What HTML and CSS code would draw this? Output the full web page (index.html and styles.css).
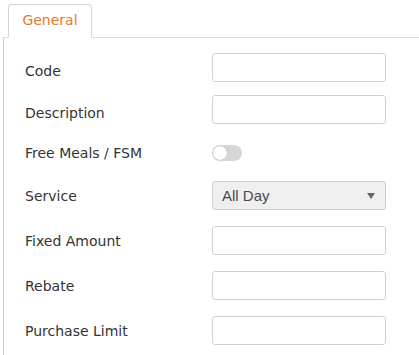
FILE: index.html
```html
<!DOCTYPE html>
<html lang="en">
<head>
    <meta charset="UTF-8">
    <meta name="viewport" content="width=device-width, initial-scale=1.0">
    <title>Meal Type</title>
    <link rel="stylesheet" href="styles.css">
</head>
<body>
    <div class="page">
        <!-- Tabs -->
        <div class="tabs">
            <div class="tab active">General</div>
        </div>

        <!-- General tab content -->
        <div class="panel">
            <div class="row row-top">
                <label class="label" for="code">Code</label>
                <input type="text" id="code" class="input-box">
            </div>
            <div class="row row-top">
                <label class="label" for="description">Description</label>
                <input type="text" id="description" class="input-box">
            </div>
            <div class="row row-toggle">
                <label class="label">Free Meals / FSM</label>
                <span class="toggle"><span class="knob"></span></span>
            </div>
            <div class="row">
                <label class="label" for="service">Service</label>
                <div class="select-box" id="service">
                    <span>All Day</span>
                    <span class="arrow"></span>
                </div>
            </div>
            <div class="row">
                <label class="label" for="fixed-amount">Fixed Amount</label>
                <input type="text" id="fixed-amount" class="input-box">
            </div>
            <div class="row">
                <label class="label" for="rebate">Rebate</label>
                <input type="text" id="rebate" class="input-box">
            </div>
            <div class="row">
                <label class="label" for="purchase-limit">Purchase Limit</label>
                <input type="text" id="purchase-limit" class="input-box">
            </div>
        </div>
    </div>
</body>
</html>
```

FILE: styles.css
```css
* {
    margin: 0;
    padding: 0;
    box-sizing: border-box;
}

body {
    font-family: 'DejaVu Sans', sans-serif;
    background: #fff;
    color: #333;
}

.page {
    padding: 4px 0 0 3px;
}

.tabs {
    display: flex;
    padding-left: 5px;
    border-bottom: 1px solid #dcdcdc;
}

.tab {
    width: 84px;
    height: 34px;
    margin-bottom: -1px;
    padding-top: 7px;
    text-align: center;
    font-size: 14px;
    color: #e8772e;
    border: 1px solid #d4d4d4;
    border-bottom-color: #fff;
    border-radius: 4px 4px 0 0;
    background: #fff;
}

.panel {
    border-left: 1px solid #cfcfcf;
    padding: 15px 0 10px 21px;
    min-height: 320px;
}

.row {
    display: flex;
    align-items: center;
    height: 29px;
    margin-bottom: 16px;
}

.row:first-child {
    margin-bottom: 13px;
}

.row-top .label {
    padding-top: 6px;
}

.row-toggle {
    height: 25px;
}

.label {
    width: 187px;
    font-size: 14px;
    color: #333;
}

.input-box {
    width: 174px;
    height: 29px;
    border: 1px solid #d2d2d2;
    border-radius: 3px;
    outline: none;
    background: #fff;
}

.toggle {
    position: relative;
    width: 30px;
    height: 16px;
    border-radius: 8px;
    background: #d6d6d6;
}

.knob {
    position: absolute;
    left: 1px;
    top: 1px;
    width: 14px;
    height: 14px;
    border-radius: 50%;
    background: #fff;
    box-shadow: 0 0 1px rgba(0, 0, 0, 0.3);
}

.select-box {
    display: flex;
    justify-content: space-between;
    align-items: center;
    width: 174px;
    height: 29px;
    padding: 0 10px 0 9px;
    border: 1px solid #cdcdcd;
    border-radius: 3px;
    background: #efefef;
    font-family: 'Liberation Sans', Arial, sans-serif;
    font-size: 15px;
    color: #4a4a4a;
}

.arrow {
    width: 0;
    height: 0;
    border-left: 4px solid transparent;
    border-right: 4px solid transparent;
    border-top: 6px solid #666;
}
```
